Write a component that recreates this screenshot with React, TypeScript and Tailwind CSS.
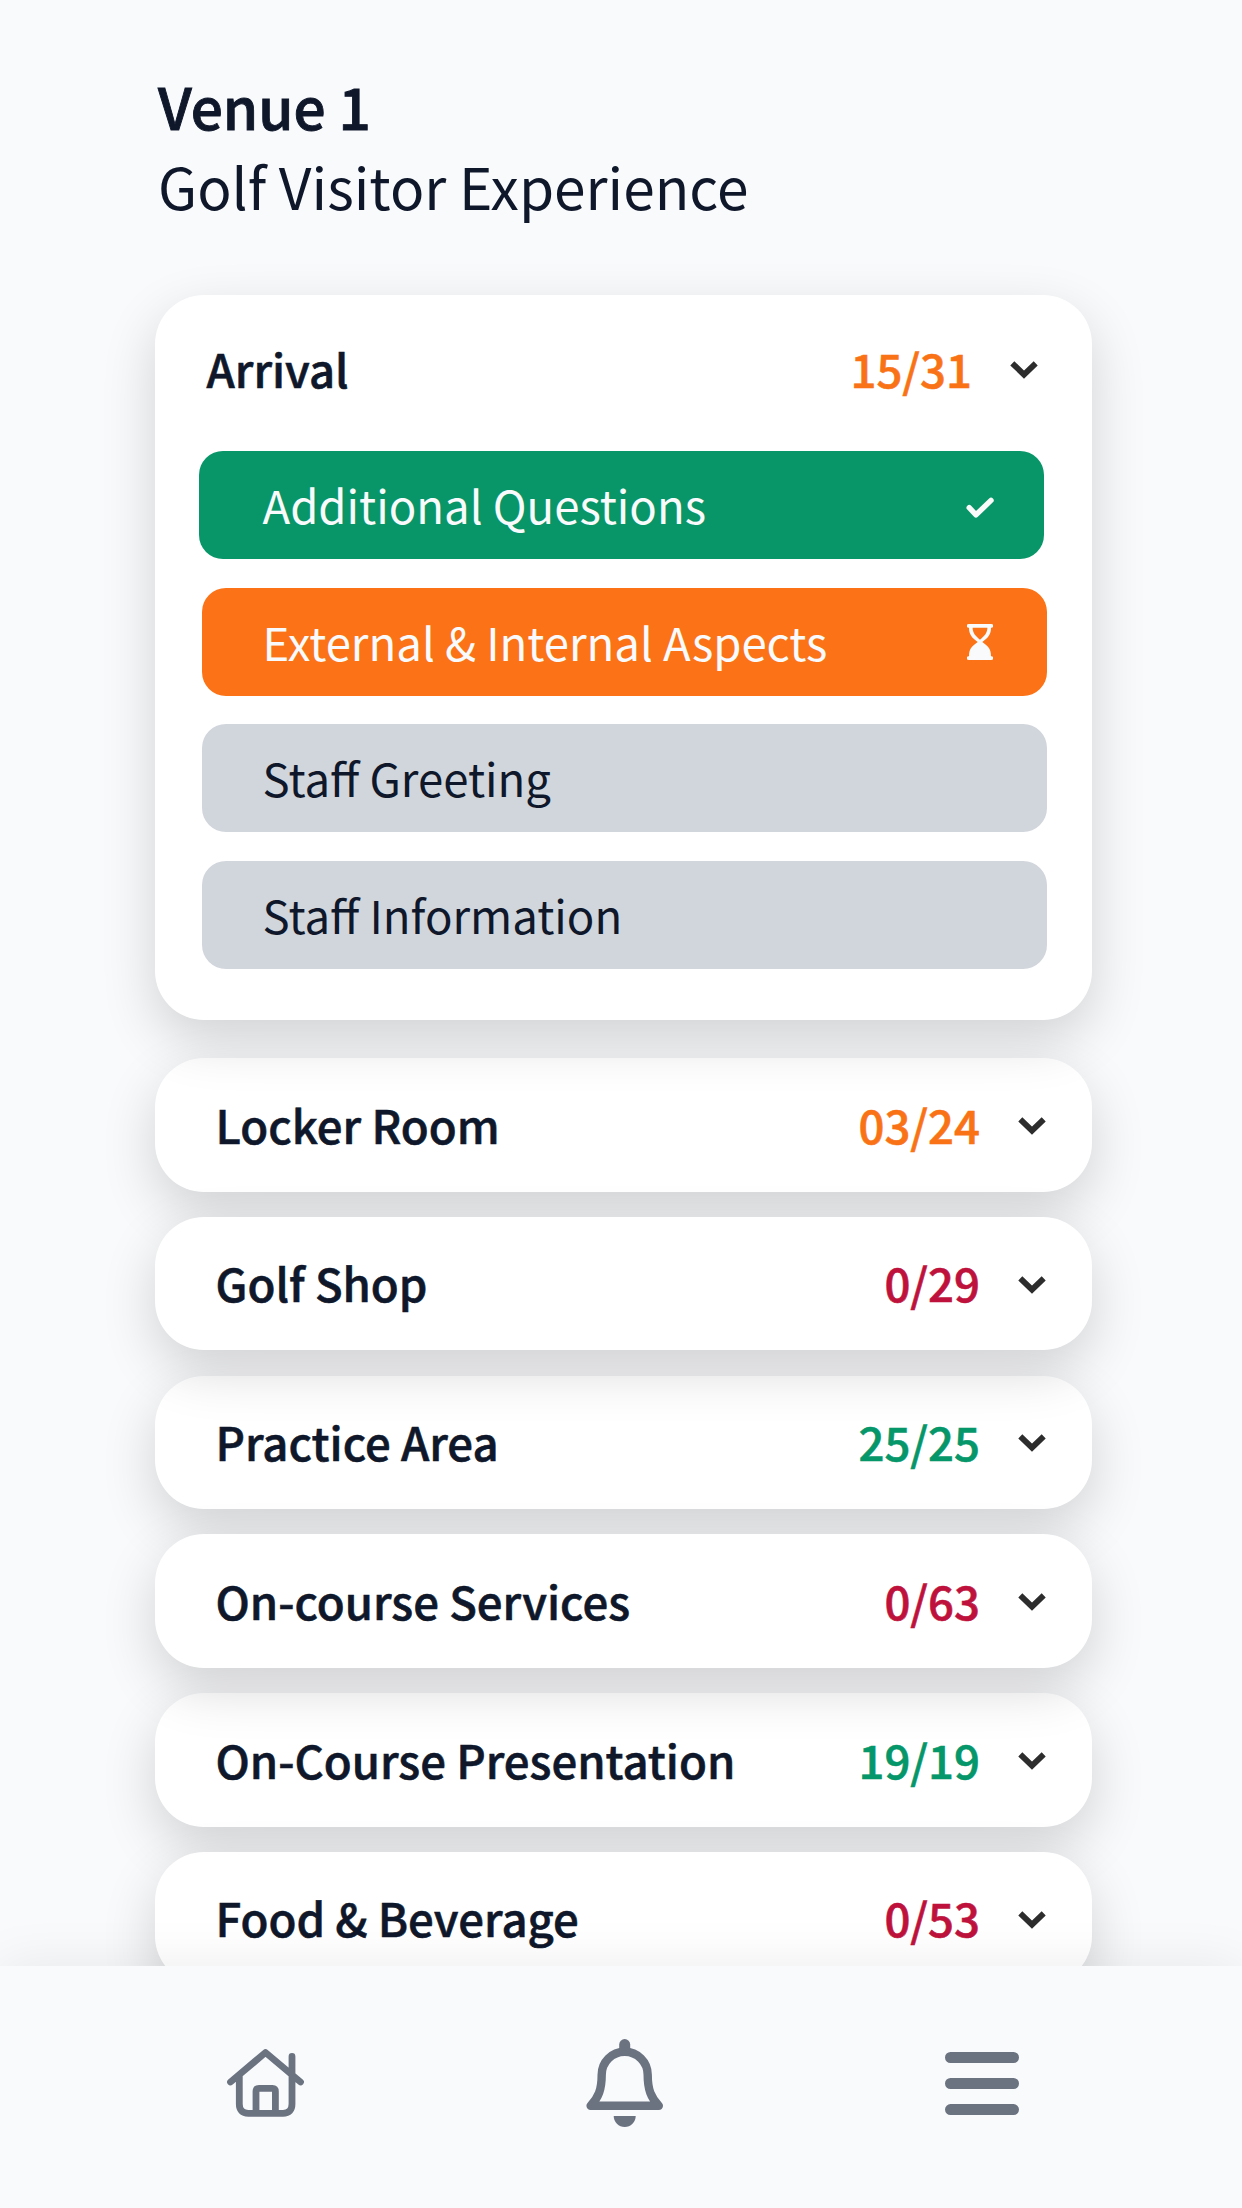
import {useState} from "react";

type Status = "done" | "progress" | "todo";

interface Item {
    label: string;
    status: Status;
}

interface Section {
    title: string;
    count: string;
    tone: string;
    layer: string;
}

const arrivalItems: Item[] = [
    {label: "Additional Questions", status: "done"},
    {label: "External & Internal Aspects", status: "progress"},
    {label: "Staff Greeting", status: "todo"},
    {label: "Staff Information", status: "todo"},
];

// every second card sits above its neighbours, so its shadow falls on them
const sections: Section[] = [
    {title: "Locker Room", count: "03/24", tone: "text-[#f97316]", layer: "z-10"},
    {title: "Golf Shop", count: "0/29", tone: "text-[#be123c]", layer: "z-20"},
    {title: "Practice Area", count: "25/25", tone: "text-[#059669]", layer: "z-10"},
    {title: "On-course Services", count: "0/63", tone: "text-[#be123c]", layer: "z-20"},
    {title: "On-Course Presentation", count: "19/19", tone: "text-[#059669]", layer: "z-10"},
    {title: "Food & Beverage", count: "0/53", tone: "text-[#be123c]", layer: "z-20"},
];

const itemStyles: Record<Status, string> = {
    done: "-ml-[3px] mr-[3px] pl-16 pr-[50px] bg-[#089669] text-gray-50",
    progress: "pl-[61px] pr-[54px] bg-[#fb7316] text-gray-50",
    todo: "pl-[61px] pr-[54px] bg-[#d1d5dc] text-[#0f172a]",
};

function Chevron() {
    return (
        <svg width="28" height="18" viewBox="0 0 28 18" fill="none" stroke="#2d2d2d" strokeWidth="5.8">
            <path d="M2.3 2.3 14 13.6 25.7 2.3" />
        </svg>
    );
}

function Check() {
    return (
        <svg className="mt-1.5" width="28" height="22" viewBox="0 0 28 22" fill="none" stroke="#fafafa" strokeWidth="5.4" strokeLinecap="round" strokeLinejoin="round">
            <path d="M3.2 10.7 10 17.8 25 3.4" />
        </svg>
    );
}

function Hourglass() {
    return (
        <svg width="26" height="36" viewBox="0 0 26 36" fill="#f9fafb">
            <path d="M1.6 0h22.8a1.9 1.9 0 0 1 0 3.8H24c0 6.4-2.4 9.6-8.7 14.2C21.8 22.5 24 25.5 24 32.2h.4a1.9 1.9 0 0 1 0 3.8H1.6a1.9 1.9 0 0 1 0-3.8H2c0-6.7 2.2-9.7 8.7-14.2C4.400 13.4 2 10.2 2 3.8h-.4a1.9 1.9 0 0 1 0-3.8Zm4 3.8c.2 5.5 2.6 7.7 7.4 12 4.8-4.3 7.2-6.500 7.400-12Z" />
        </svg>
    );
}

function SectionCard({section}: { section: Section }) {
    return (
        <button className={`relative ${section.layer} flex h-[133.5px] w-full shrink-0 items-center rounded-[49px] bg-white pr-[46px] pl-[61px] text-left shadow-[0_20px_54px_rgba(0,0,0,0.16)]`}>
            <span className="-mt-px flex-1 text-[45.5px] font-medium [-webkit-text-stroke:0.6px]">{section.title}</span>
            <span className={`-mt-px text-[45.5px] font-medium [-webkit-text-stroke:0.6px] ${section.tone}`}>{section.count}</span>
            <span className="mt-0.5 ml-[38px]"><Chevron /></span>
        </button>
    );
}

export default function App() {
    const [open, setOpen] = useState(true);

    return (
        <div className="flex h-[2208px] w-[1242px] flex-col overflow-hidden bg-[#f9fafc] font-['Noto_Sans_CJK_JP',sans-serif] leading-none text-[#0f172a]">
            <main className="flex h-[1966px] shrink-0 flex-col overflow-hidden pt-[75px] pr-[150px] pl-[154.5px]">
                <header className="h-[220px] shrink-0 pl-[3.5px] text-[56.8px] leading-[80px]">
                    <h1 className="-mt-[10px] font-medium [-webkit-text-stroke:0.9px]">Venue 1</h1>
                    <p>Golf Visitor Experience</p>
                </header>
                <section className="relative z-20 mb-[38.5px] h-[724.5px] shrink-0 rounded-[49px] bg-white pr-[45px] pl-[47px] shadow-[0_20px_54px_rgba(0,0,0,0.16)]">
                    <button className="flex h-[156px] w-full items-center pr-[9px] pb-2 pl-[5px] text-left" onClick={() => setOpen(!open)}>
                        <span className="flex-1 text-[45.5px] font-medium [-webkit-text-stroke:0.6px]">Arrival</span>
                        <span className="text-[45.5px] font-medium text-[#f97316] [-webkit-text-stroke:0.6px]">15/31</span>
                        <span className="mt-0.5 ml-[38px]"><Chevron /></span>
                    </button>
                    {open && (
                        <ul className="flex flex-col gap-[28.5px]">
                            {arrivalItems.map((item) => (
                                <li key={item.label} className={`flex h-[108px] items-center justify-between rounded-3xl text-[45.5px] ${itemStyles[item.status]}`}>
                                    <span>{item.label}</span>
                                    {item.status === "done" && <Check />}
                                    {item.status === "progress" && <Hourglass />}
                                </li>
                            ))}
                        </ul>
                    )}
                </section>
                <div className="flex flex-col gap-[25.3px]">
                    {sections.map((section) => <SectionCard key={section.title} section={section} />)}
                </div>
            </main>
            <nav className="relative z-30 flex h-[242px] shrink-0 justify-between bg-[#f9fafc] pt-[72px] pr-[223px] pl-[226px] text-[#6b7280] shadow-[0_0_50px_rgba(0,0,0,0.08)]">
                <svg width="78" height="82" viewBox="0 0 78 82" fill="none" stroke="currentColor" strokeWidth="6.8" strokeLinecap="round" strokeLinejoin="round">
                    <path d="M4.5 44 39.5 14.5 74.5 44M66 36V18.5M13.3 38v28c0 6 3 9.3 9 9.3H57c6 0 9-3.3 9-9.3V38M30 75V53.5c0-2 1-3.200 3-3.200h13.400c2 0 3 1.200 3 3.200V75" />
                </svg>
                <svg width="78" height="90" viewBox="0 0 78 90" fill="none" stroke="currentColor" strokeWidth="8.4" strokeLinejoin="round">
                    <path d="M4.600 67.800c7.900-8.500 11.100-16 11.100-31a23 23 0 0 1 46 0c0 15 3.200 22.500 11.100 31Z" />
                    <path d="M38.700 6.600v6" strokeWidth="11" strokeLinecap="round" />
                    <path d="M27.700 78h22a11 11 0 0 1-22 0Z" fill="currentColor" stroke="none" />
                </svg>
                <svg width="74" height="80" viewBox="0 0 74 80" stroke="currentColor" strokeWidth="11" strokeLinecap="round">
                    <path d="M5.5 19.5h63M5.5 45.5h63M5.5 71.6h63" />
                </svg>
            </nav>
        </div>
    );
}
